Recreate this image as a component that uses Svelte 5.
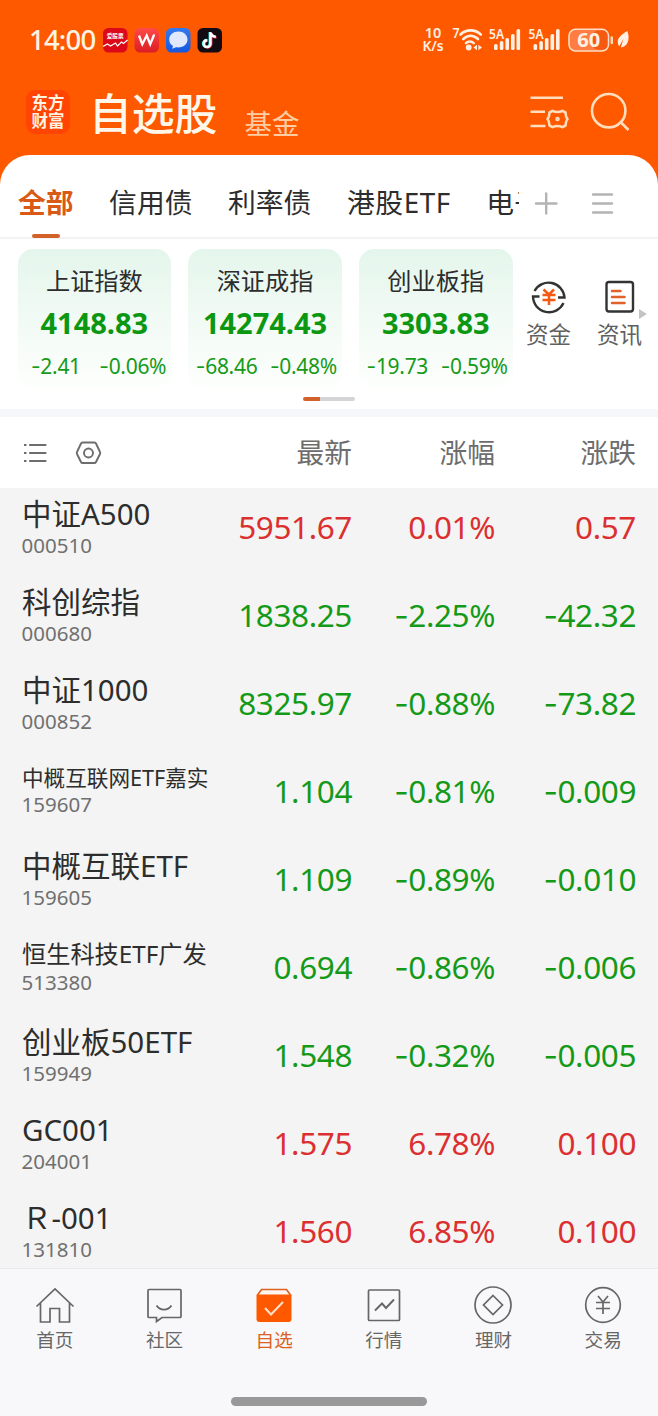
<script>
  const tabs = ['信用债', '利率债', '港股ETF', '电子'];

  const indices = [
    { name: '上证指数', value: '4148.83', diff: '2.41', rate: '0.06%' },
    { name: '深证成指', value: '14274.43', diff: '68.46', rate: '0.48%' },
    { name: '创业板指', value: '3303.83', diff: '19.73', rate: '0.59%' }
  ];

  const stocks = [
    { name: '中证A500', code: '000510', price: '5951.67', rate: '0.01%', diff: '0.57', up: true },
    { name: '科创综指', code: '000680', price: '1838.25', rate: '2.25%', diff: '42.32' },
    { name: '中证1000', code: '000852', price: '8325.97', rate: '0.88%', diff: '73.82' },
    { name: '中概互联网ETF嘉实', code: '159607', price: '1.104', rate: '0.81%', diff: '0.009', size: 'small' },
    { name: '中概互联ETF', code: '159605', price: '1.109', rate: '0.89%', diff: '0.010' },
    { name: '恒生科技ETF广发', code: '513380', price: '0.694', rate: '0.86%', diff: '0.006', size: 'medium' },
    { name: '创业板50ETF', code: '159949', price: '1.548', rate: '0.32%', diff: '0.005' },
    { name: 'GC001', code: '204001', price: '1.575', rate: '6.78%', diff: '0.100', up: true },
    { name: 'Ｒ-001', code: '131810', price: '1.560', rate: '6.85%', diff: '0.100', up: true }
  ];

  const navItems = ['首页', '社区', '自选', '行情', '理财', '交易'];
  let active = '自选';
</script>

<div class="app">
  <header>
    <div class="status">
      <span class="time">14:00</span>
      <svg class="app-icons" width="120" height="26" viewBox="0 0 120 26">
        <defs>
          <linearGradient id="red" x1="0" y1="0" x2="0" y2="1">
            <stop offset="0" stop-color="#ff4a48" />
            <stop offset="1" stop-color="#dc1c25" />
          </linearGradient>
          <linearGradient id="blue" x1="0" y1="0" x2="0" y2="1">
            <stop offset="0" stop-color="#3379ee" />
            <stop offset="1" stop-color="#1458df" />
          </linearGradient>
        </defs>
        <rect x="0" y="1" width="24.5" height="24.5" rx="5.5" fill="#dc0a18" />
        <text x="12.2" y="10.7" font-size="5.7" font-weight="700" fill="#fff" text-anchor="middle">爱股票</text>
        <path d="M0 19.500l4.500-2.500 3 2 5-3 2 3 4-4 2 1.500 4-3.500" fill="none" stroke="#fff" stroke-width="1.200" />
        <rect x="31.500" y="1" width="24.500" height="24.500" rx="5.500" fill="url(#red)" />
        <path d="M36 8.500l3.300 8.700 4.400-8.700 3.500 8.700 3.600-8.700h1" fill="none" stroke="#fff" stroke-width="2.300" />
        <rect x="63" y="1" width="24.500" height="24.500" rx="5.500" fill="url(#blue)" />
        <path d="M75.500 4.500c-5.300 0-9.300 3.500-9.300 8 0 3 1.500 5.200 3.800 6.500l-.9 2.800 3.900-1.500c6.500 1 11.500-2.700 11.500-7.800 0-4.500-4-8-9-8z" fill="#dfe8fd" />
        <rect x="94.500" y="1" width="24.500" height="24.500" rx="5.500" fill="#130b12" />
        <g fill="none" stroke-width="2.500">
          <path d="M106.800 5v11.500a3.400 3.400 0 1 1-3.300-3.400M107 6c.8 2.700 2.500 3.800 5 4" stroke="#35e6e4" />
          <path d="M108.200 6v11a3.400 3.400 0 1 1-3.300-3.400M108.500 6.500c.8 2.700 2.500 3.800 5 4" stroke="#f52f58" />
          <path d="M107.500 5.200v11.500a3.400 3.400 0 1 1-3.300-3.400M107.500 5.500c.8 2.900 2.500 4 5.300 4.200" stroke="#fff" />
        </g>
      </svg>
      <svg class="signals" width="212" height="34" viewBox="420 23 212 34" fill="#fff0e4">
        <text x="433" y="38.300" font-size="14.500" font-weight="600" text-anchor="middle">10</text>
        <text x="433" y="51.300" font-size="13.800" font-weight="600" text-anchor="middle">K/s</text>
        <text x="452.500" y="37.500" font-size="14" font-weight="600" textLength="7" lengthAdjust="spacingAndGlyphs">7</text>
        <g fill="none" stroke="#fff0e4" stroke-width="2.600" stroke-linecap="round">
          <path d="M460.500 34.500c5.500-5.500 14.500-5.500 20.300 0" />
          <path d="M463.300 39c4.500-4.200 10.200-4.200 14.700 0" />
          <path d="M466 43.200c2.200-2.200 5.500-2.200 7.700 0" />
        </g>
        <circle cx="468.700" cy="47.500" r="2.900" />
        <path d="M477 44.700v5.600l-3.600-2.800zM478.400 44.700v5.600l3.600-2.800z" />
        {#each [489, 528.5] as x (x)}
          <text {x} y="39" font-size="15" font-weight="600" textLength="15" lengthAdjust="spacingAndGlyphs">5A</text>
          <g>
            <rect x={x + 5} y="44" width="3.600" height="6" rx="1.500" />
            <rect x={x + 10.8} y="41" width="3.600" height="9" rx="1.500" />
            <rect x={x + 16.4} y="38" width="3.600" height="12" rx="1.500" />
            <rect x={x + 22} y="34" width="3.600" height="16" rx="1.500" />
            <rect x={x + 27.5} y="29" width="3.600" height="21" rx="1.500" />
          </g>
        {/each}
        <rect x="569" y="29.300" width="39.500" height="21.700" rx="6.500" fill="#ff7d43" stroke="#ffdcc4" stroke-width="1.600" />
        <rect x="593" y="30.500" width="14.500" height="19.300" rx="5" fill="#f65a12" />
        <text x="588.700" y="47.400" font-size="20" font-weight="700" text-anchor="middle">60</text>
        <path d="M611.800 37.500v5.500" stroke="#ffdcc4" stroke-width="2.400" stroke-linecap="round" />
        <path d="M627.300 31c-6 3.500-10 7-9.500 11.500.1 1.800.6 3 1.500 3.700l4.200-7.500-2.700 8.800c6-.6 10-7.500 6.500-16.500z" />
      </svg>
    </div>
    <div class="title-bar">
      <div class="logo"><span>东方</span><span>财富</span></div>
      <h1>自选股</h1>
      <span class="fund">基金</span>
      <svg class="tools" width="102" height="44" viewBox="528 90 102 44" fill="none" stroke="#ffddbd" stroke-width="2.600">
        <path d="M530.500 97.700h32.500M530.500 111.800h14.500M530.500 126h15" />
        <path d="M552.500 110.800q5 2.400 10 0l3 1.700q.1 4.300 2 6.500-1.900 2.200-2 6.500l-3 1.700q-5-2.400-10 0l-3-1.700q-.1-4.300-2-6.500 1.900-2.200 2-6.500z" stroke-linejoin="round" />
        <circle cx="557.500" cy="119" r="1" />
        <circle cx="608.700" cy="110.700" r="16.700" />
        <path d="M620.500 122l8 8" />
      </svg>
    </div>
  </header>

  <main>
    <nav class="tabs">
      <div class="tab-list">
        <span class="tab selected">全部</span>
        {#each tabs as tab (tab)}
          <span class="tab">{tab}</span>
        {/each}
      </div>
      <svg class="tab-tools" width="80" height="24" viewBox="534 191 80 24" stroke="#b4b4b4" stroke-width="2.400" stroke-linecap="round">
        <path d="M536 202.500h20.500M546.200 192.500v20M593 193.500h19M593 202.500h19M593 211.500h19" />
      </svg>
    </nav>

    <section class="overview">
      {#each indices as item (item.name)}
        <div class="card">
          <div class="card-name">{item.name}</div>
          <div class="card-value">{item.value}</div>
          <div class="card-change">
            <span><i>-</i>{item.diff}</span>
            <span><i>-</i>{item.rate}</span>
          </div>
        </div>
      {/each}
      <div class="shortcut">
        <svg width="36" height="36" viewBox="0 0 36 36" fill="none" stroke="#333" stroke-width="2.400">
          <path d="M3.500 12A16 16 0 0 1 33.500 18.500H27M32.500 24A16 16 0 0 1 2 17.500H8.500" />
          <path d="M12.500 10.500l5.500 5 5-5M11.500 16h13M11.500 21h13M18 15.500V26" stroke="#f45a12" stroke-width="2.500" />
        </svg>
        <span>资金</span>
      </div>
      <div class="shortcut">
        <svg width="36" height="36" viewBox="0 0 36 36" fill="none" stroke="#333" stroke-width="2.400">
          <rect x="4.500" y="3" width="26.500" height="29.500" rx="2.500" />
          <path d="M10 12h8.500M10 18h12.500M10 24h12.500" stroke="#e2622b" stroke-width="2.500" stroke-linecap="round" />
        </svg>
        <span>资讯</span>
      </div>
      <b class="more"></b>
    </section>
    <div class="pager"><span></span></div>

    <div class="row table-head">
      <svg width="80" height="28" viewBox="22 439 80 28" fill="none" stroke="#6d6d6d" stroke-width="2.200">
        <path d="M30 445h15.500M30 453h15.500M30 461h15.500" stroke-linecap="round" />
        <path d="M24 445h2.500M24 453h2.500M24 461h2.500" />
        <path d="M82.500 442.500h12q1 0 1.500 1l4 8.500q.5 1 0 2l-4 8q-.5 1-1.500 1h-12q-1 0-1.500-1l-4-8q-.5-1 0-2l4-8.500q.5-1 1.500-1z" stroke-width="1.900" />
        <circle cx="88.500" cy="453" r="4.500" stroke-width="1.900" />
      </svg>
      <span>最新</span>
      <span>涨幅</span>
      <span>涨跌</span>
    </div>

    <section class="stocks">
      <div class="stock-list">
        {#each stocks as stock (stock.code)}
          <div class="row stock" class:up={stock.up}>
            <div class="info {stock.size ?? ''}">
              <div class="name">{stock.name}</div>
              <div class="code">{stock.code}</div>
            </div>
            <span>{stock.price}</span>
            <span>{#if !stock.up}<i>-</i>{/if}{stock.rate}</span>
            <span>{#if !stock.up}<i>-</i>{/if}{stock.diff}</span>
          </div>
        {/each}
      </div>
    </section>
  </main>

  <footer>
    <nav class="bottom-nav">
      {#each navItems as item, i (item)}
        <div class="nav-item" class:active={item === active}>
          <svg width="40" height="40" viewBox="0 0 40 40" fill="none" stroke="currentColor" stroke-width="1.700">
            {#if i === 0}
              <path d="M1.500 21.500L20 4l18.500 17.500M5.500 18v19H15V23.500h9.500V37H34.500V18" />
            {:else if i === 1}
              <path d="M5 4.500h31q1 0 1 1v26q0 1-1 1H18l-5.500 4v-4h-7.500q-1 0-1-1v-26q0-1 1-1z" />
              <path d="M12.500 20.500c4 5.500 11 5.500 15 0" stroke-width="1.900" />
            {:else if i === 2}
              <path d="M3.500 10l4-5.500h25L36.500 10" fill="#fff5ec" />
              <path d="M2.500 9.500h35V34q0 3-3 3h-29q-3 0-3-3z" fill="#ff5900" stroke="none" />
              <path d="M11 23l6 6.500 12-12.500" stroke="#ffe2cd" stroke-width="2" />
            {:else if i === 3}
              <rect x="4.500" y="5" width="31" height="30.500" rx="1" />
              <path d="M11 25.500l7-7 4 4.500 8-8.500" stroke-width="1.900" />
            {:else if i === 4}
              <circle cx="20" cy="20" r="18" />
              <path d="M20 10.500l9.500 9.500-9.500 9.500-9.500-9.500z" />
            {:else}
              <circle cx="20" cy="20" r="17.300" />
              <path d="M15 11l5 6 5-6M13 17.500h14M13 23.500h14M20 17v12" />
            {/if}
          </svg>
          <span>{item}</span>
        </div>
      {/each}
    </nav>
    <div class="home-bar"></div>
  </footer>
</div>

<style>
  :global(body) {
    background: #ff5900;
  }
  .app {
    width: 658px;
    height: 1416px;
    display: flex;
    flex-direction: column;
    overflow: hidden;
    font-family: 'Noto Sans', 'Noto Sans CJK SC', sans-serif;
    color: #2d2d2d;
  }
  i {
    font-family: Inter, sans-serif;
    font-style: normal;
  }
  header {
    height: 155px;
    background: #ff5900;
  }
  .status {
    display: flex;
    align-items: center;
    height: 80px;
    padding: 0 26px 0 29px;
  }
  .time {
    width: 74px;
    font-size: 27.500px;
    font-weight: 500;
    letter-spacing: -0.800px;
    line-height: 36px;
    color: #fff3e4;
  }
  .signals {
    margin-left: auto;
  }
  .title-bar {
    display: flex;
    align-items: center;
    height: 64px;
    padding: 0 28px 0 26px;
  }
  .logo {
    display: flex;
    flex-direction: column;
    align-items: center;
    justify-content: center;
    width: 44px;
    height: 44px;
    border-radius: 9px;
    background: #ff4403;
    font-size: 16.500px;
    font-weight: 700;
    line-height: 18.500px;
    color: #fff3e2;
  }
  h1 {
    margin: 4px 0 0 19px;
    font-size: 42.800px;
    font-weight: 500;
    line-height: 60px;
    color: #fff8ea;
  }
  .fund {
    margin: 23px 0 0 27px;
    font-size: 27.500px;
    line-height: 36px;
    color: #ffcda3;
  }
  .tools {
    margin-left: auto;
  }
  main {
    flex: 1;
    display: flex;
    flex-direction: column;
    min-height: 0;
    border-radius: 30px 30px 0 0;
    background: #fff;
  }
  .tabs {
    display: flex;
    align-items: center;
    box-sizing: border-box;
    height: 84px;
    padding-left: 18px;
    border-bottom: 2px solid #f3f3f4;
  }
  .tab-list {
    display: flex;
    gap: 35.500px;
    width: 501px;
    height: 83px;
    margin-right: 15px;
    overflow: hidden;
    white-space: nowrap;
  }
  .tab {
    flex: none;
    font-size: 27.800px;
    line-height: 95px;
  }
  .tab:nth-child(4) {
    letter-spacing: 0.600px;
  }
  .selected {
    display: flex;
    flex-direction: column;
    align-items: center;
    font-weight: 700;
    color: #d85a16;
  }
  .selected::after {
    content: '';
    flex: none;
    width: 28px;
    height: 4px;
    margin-top: -16px;
    border-radius: 2px;
    background: #d2622a;
  }
  .tab-tools {
    margin-top: 15px;
  }
  .overview {
    display: flex;
    gap: 17px;
    height: 139px;
    padding: 10px 0 0 17.500px;
  }
  .card {
    flex: none;
    width: 153.700px;
    border-radius: 15px;
    background: linear-gradient(#e4f6ec, #f4fbf6 60%, #fdfffd);
    text-align: center;
  }
  .card-name {
    margin-top: 14px;
    font-size: 24.200px;
    line-height: 36px;
  }
  .card-value {
    margin-top: 5px;
    font-size: 29px;
    font-weight: 700;
    line-height: 38px;
    color: #0b9711;
  }
  .card-change {
    display: grid;
    grid-template-columns: 1fr 1fr;
    margin-top: 8px;
    font-size: 21px;
    line-height: 32px;
    color: #159a19;
    letter-spacing: -0.300px;
  }
  .shortcut {
    display: flex;
    flex-direction: column;
    align-items: center;
    width: 46px;
    margin: 30px 12px 0 -4px;
    font-size: 22.500px;
    line-height: 39px;
    color: #606060;
    white-space: nowrap;
  }
  .more {
    width: 0;
    height: 0;
    margin: 60px 0 0 -33px;
    border: 5.500px solid transparent;
    border-left: 8px solid #c4c4c4;
    border-right: 0;
  }
  .pager {
    height: 21px;
    border-bottom: 8px solid #f6f7fa;
  }
  .pager::before {
    content: '';
    display: block;
    width: 52px;
    height: 4px;
    margin: 9px 0 0 303px;
    border-radius: 2px;
    background: linear-gradient(90deg, #d2622a 17px, #d5d5d8 17px);
  }
  .row {
    display: grid;
    grid-template-columns: 200px 130px 143px 141px;
    padding: 0 22px;
    align-items: center;
    text-align: right;
  }
  .table-head {
    height: 71px;
    font-size: 27.700px;
    color: #6d6d6d;
  }
  .table-head span {
    margin-top: -3px;
  }
  .stocks {
    flex: 1;
    min-height: 0;
    overflow: hidden;
    background: #f4f4f4;
  }
  .stock-list {
    margin-top: -5px;
  }
  .stock {
    height: 88px;
    font-size: 31.500px;
    letter-spacing: -0.400px;
    line-height: 44px;
    color: #149a18;
  }
  .up {
    color: #db2f30;
  }
  .info {
    align-self: start;
    letter-spacing: 0;
    text-align: left;
    white-space: nowrap;
  }
  .name {
    margin-top: 12px;
    font-size: 29.500px;
    line-height: 38px;
    color: #2d2d2d;
  }
  .code {
    margin-left: -0.500px;
    font-size: 20.500px;
    line-height: 24px;
    color: #707070;
  }
  .medium .name {
    font-size: 24.200px;
  }
  .medium .code {
    margin-top: -3px;
  }
  .small .name {
    font-size: 21.600px;
  }
  .small .code {
    margin-top: -5px;
  }
  footer {
    box-sizing: border-box;
    height: 148px;
    border-top: 1px solid #e9e9e9;
    background: #f8f8fa;
  }
  .bottom-nav {
    display: grid;
    grid-template-columns: repeat(6, 1fr);
    height: 128px;
  }
  .nav-item {
    display: flex;
    flex-direction: column;
    align-items: center;
    padding-top: 16px;
    font-size: 18.600px;
    line-height: 30px;
    color: #666;
  }
  .active {
    color: #dc6222;
  }
  .home-bar {
    width: 196px;
    height: 9px;
    margin: 0 auto;
    border-radius: 5px;
    background: #999;
  }
</style>
